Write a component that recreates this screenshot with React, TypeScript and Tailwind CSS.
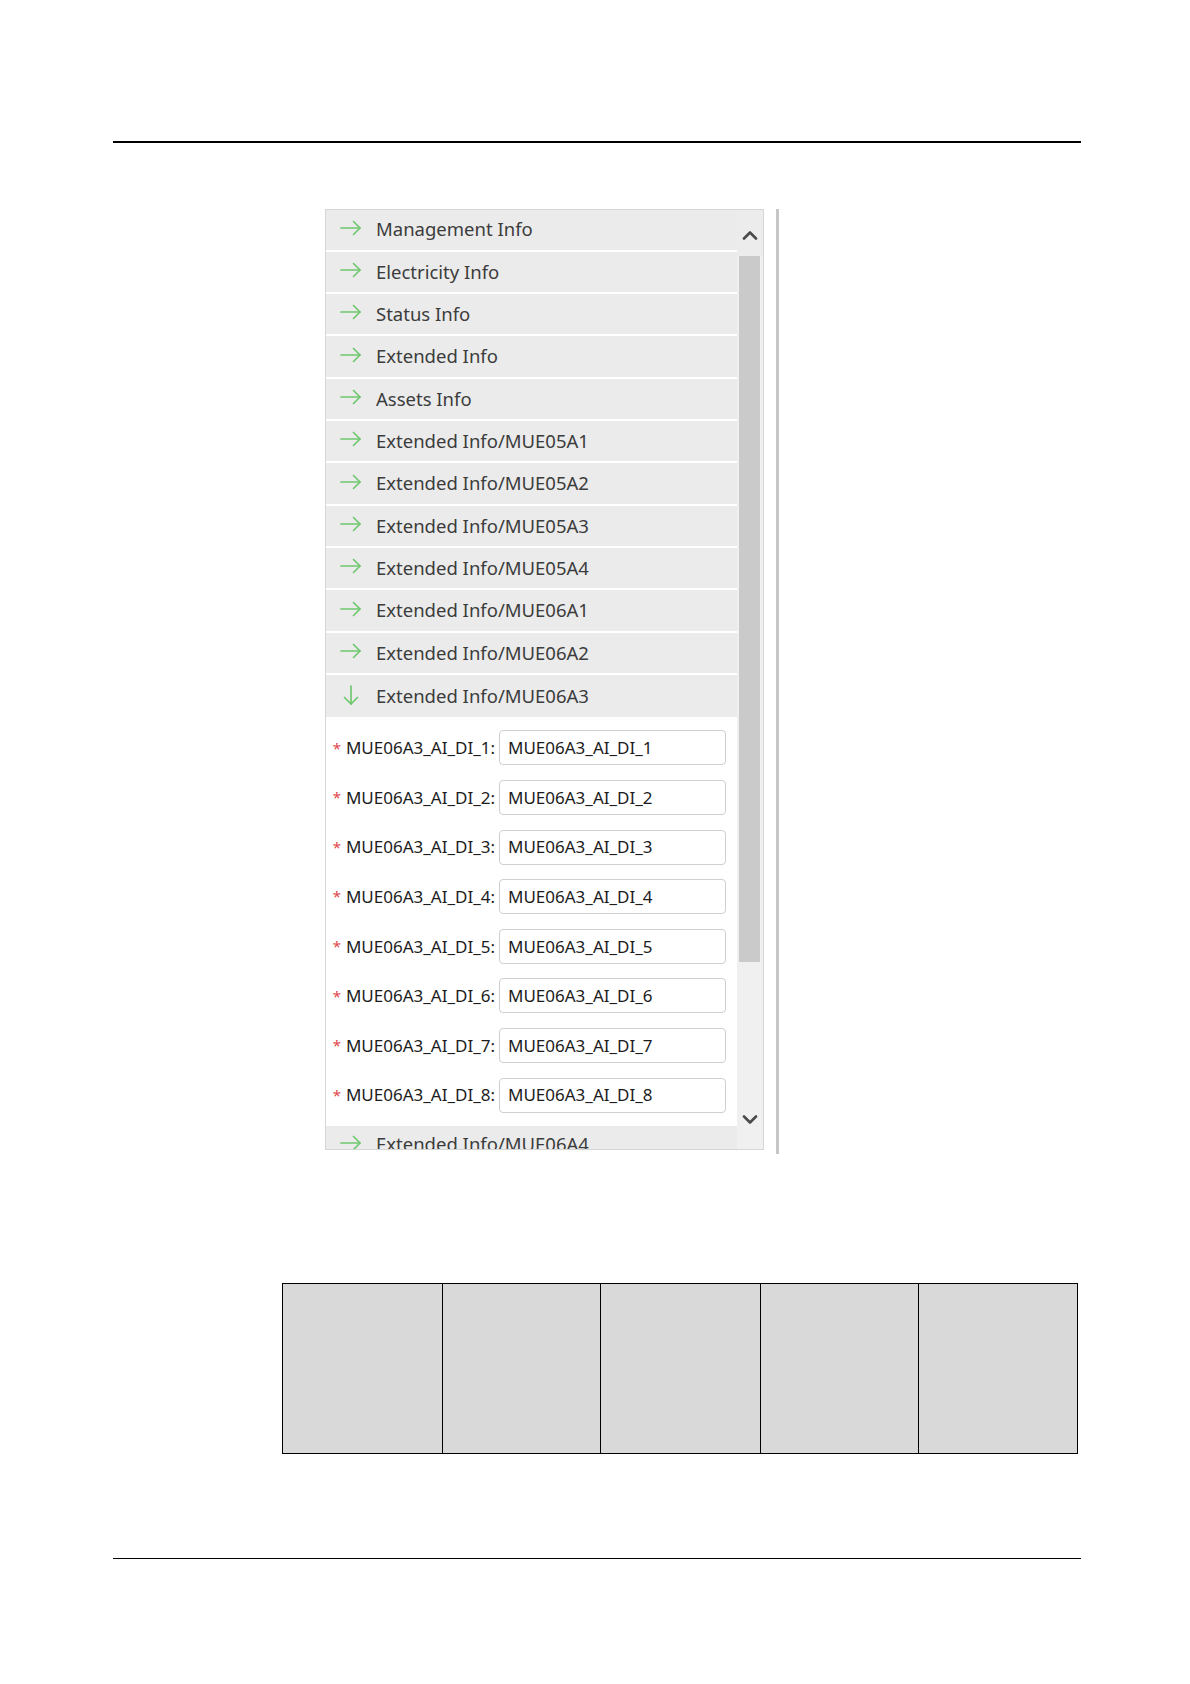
import React from "react";

const rows = [
  "Management Info",
  "Electricity Info",
  "Status Info",
  "Extended Info",
  "Assets Info",
  "Extended Info/MUE05A1",
  "Extended Info/MUE05A2",
  "Extended Info/MUE05A3",
  "Extended Info/MUE05A4",
  "Extended Info/MUE06A1",
  "Extended Info/MUE06A2",
];

const font = { fontFamily: '"Noto Sans", "Open Sans", sans-serif' };

function RightArrow() {
  return (
    <svg width="22" height="16" viewBox="0 0 22 16" fill="none" stroke="#6fc86f" strokeWidth="1.7" strokeLinecap="round" strokeLinejoin="round">
      <path d="M1 8 H20" />
      <path d="M13.5 1.5 L20 8 L13.5 14.5" />
    </svg>
  );
}

function DownArrow() {
  return (
    <svg width="22" height="20" viewBox="0 0 22 20" fill="none" stroke="#6fc86f" strokeWidth="1.7" strokeLinecap="round" strokeLinejoin="round">
      <path d="M11 1 V19" />
      <path d="M4.5 12.5 L11 19 L17.5 12.5" />
    </svg>
  );
}

function Row({ label, down }: { label: string; down?: boolean }) {
  return (
    <div className="flex h-[42.33px] shrink-0 items-center border-b-2 border-white bg-[#ebebeb] pl-[14px]">
      <div className="mb-[4px] flex w-[36px] items-center">{down ? <DownArrow /> : <RightArrow />}</div>
      <span className="mb-[1px] text-[18.5px] text-[#3c3c3c]">{label}</span>
    </div>
  );
}

function Field({ n }: { n: number }) {
  return (
    <div className="flex h-[35px] items-center">
      <div className="flex w-[172px] items-center justify-end pr-[4px] text-[17px] text-[#1c1c1c]">
        <span className="mr-[5px] text-[15px] text-[#e0474c]">*</span>
        <span>MUE06A3_AI_DI_{n}:</span>
      </div>
      <div className="flex h-[35px] w-[227px] items-center rounded-[4px] border border-[#cfcfcf] bg-white pl-[8px] text-[17px] text-[#1c1c1c]">
        MUE06A3_AI_DI_{n}
      </div>
    </div>
  );
}

function Chevron({ up }: { up?: boolean }) {
  return (
    <svg width="16" height="10" viewBox="0 0 16 10" fill="none" stroke="#4a4a4a" strokeWidth="2.6" strokeLinecap="round" strokeLinejoin="round">
      {up ? <path d="M2 8.5 L8 2.5 L14 8.5" /> : <path d="M2 1.5 L8 7.5 L14 1.5" />}
    </svg>
  );
}

export default function App() {
  return (
    <div className="flex h-[1684px] w-[1190px] flex-col bg-white" style={font}>
      <div className="ml-[113px] mt-[141px] h-[1.5px] w-[968px] bg-black" />

      <div className="ml-[325px] mt-[66px] flex items-start">
        <div className="flex h-[941px] w-[439px] overflow-hidden border border-[#d6d6d6] bg-white">
          <div className="flex w-[411px] flex-col overflow-hidden">
            {rows.map((r) => (
              <Row key={r} label={r} />
            ))}
            <div className="flex h-[42.33px] shrink-0 items-center bg-[#ebebeb] pl-[14px]">
              <div className="mb-[2px] flex w-[36px] items-center">
                <DownArrow />
              </div>
              <span className="mb-[1px] text-[18.5px] text-[#3c3c3c]">Extended Info/MUE06A3</span>
            </div>
            <div className="flex h-[409px] shrink-0 flex-col gap-[14.6px] bg-white pl-[1px] pt-[13px]">
              {[1, 2, 3, 4, 5, 6, 7, 8].map((n) => (
                <Field key={n} n={n} />
              ))}
            </div>
            <div className="flex h-[42px] shrink-0 items-start bg-[#ebebeb] pl-[14px] pt-[5px]">
              <div className="mt-[4px] flex w-[36px] items-center">
                <RightArrow />
              </div>
              <span className="text-[18.5px] leading-[25px] text-[#3c3c3c]">Extended Info/MUE06A4</span>
            </div>
          </div>
          <div className="flex w-[26px] flex-col bg-[#f0f0f0]">
            <div className="flex h-[46px] items-center justify-center bg-[#ececec] pt-[4px]">
              <Chevron up />
            </div>
            <div className="ml-[2px] h-[706px] w-[21px] bg-[#cacaca]" />
            <div className="flex-1" />
            <div className="flex h-[40px] items-center justify-center">
              <Chevron />
            </div>
            <div className="h-[9px]" />
          </div>
        </div>
        <div className="ml-[12px] h-[945px] w-[3px] bg-[#c6c6c6]" />
      </div>

      <div className="ml-[282px] mt-[129px] grid h-[171px] w-[796px] grid-cols-[160px_158px_160px_158px_1fr] border-[1.5px] border-black bg-[#d9d9d9]">
        <div className="border-r-[1.5px] border-black" />
        <div className="border-r-[1.5px] border-black" />
        <div className="border-r-[1.5px] border-black" />
        <div className="border-r-[1.5px] border-black" />
        <div />
      </div>

      <div className="ml-[113px] mt-[104px] h-[1.5px] w-[968px] bg-black" />
    </div>
  );
}
